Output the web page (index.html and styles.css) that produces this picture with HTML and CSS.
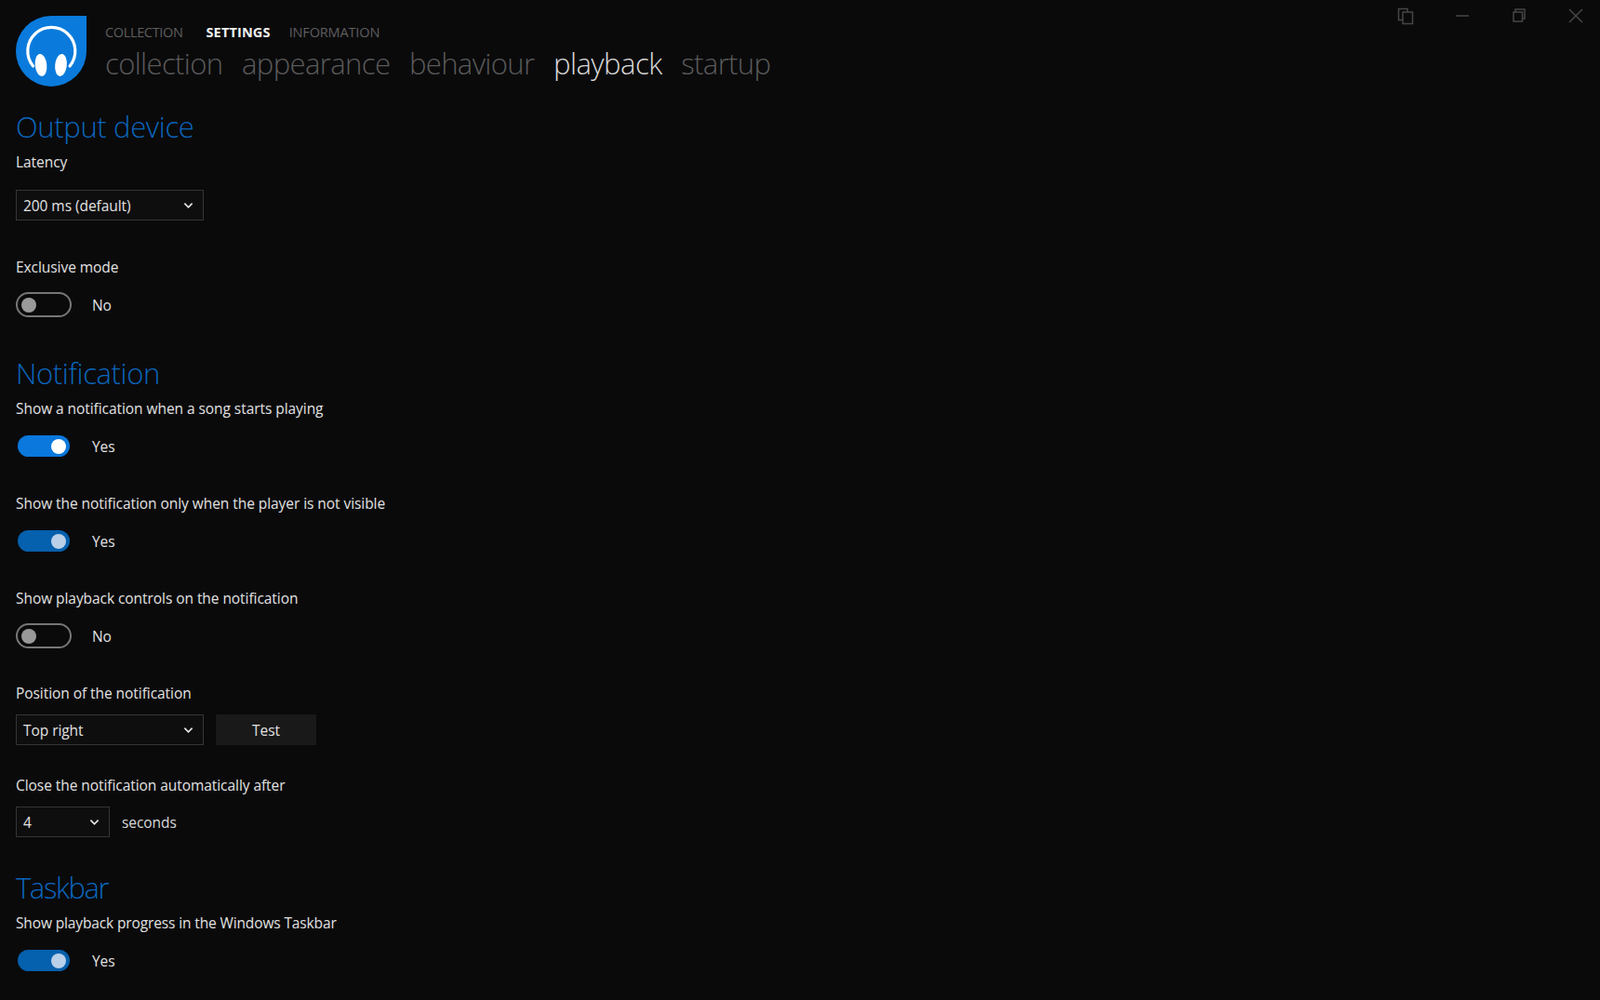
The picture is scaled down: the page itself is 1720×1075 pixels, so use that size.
FILE: index.html
```html
<!DOCTYPE html>
<html lang="en">
<head>
<meta charset="utf-8">
<title>Settings - Playback</title>
<link rel="stylesheet" href="styles.css">
</head>
<body>
<header class="header">
  <svg class="logo" viewBox="17 17 76 76" width="76" height="76" aria-hidden="true">
    <path d="M93 17V55A38 38 0 1 1 55 17Z" fill="#0a7bdc"/>
    <path d="M35.500 71A25.500 25.500 0 1 1 75.100 71" fill="none" stroke="#fff" stroke-width="3.200" stroke-linecap="round"/>
    <ellipse cx="44" cy="70" rx="6.300" ry="12" fill="#fff" transform="rotate(-6 44 70)"/>
    <ellipse cx="65.500" cy="70" rx="6.300" ry="12" fill="#fff" transform="rotate(6 65.500 70)"/>
  </svg>
  <nav class="nav">
    <div class="tabs">
      <span class="tab tab-first">COLLECTION</span>
      <span class="tab tab-active">SETTINGS</span>
      <span class="tab tab-last">INFORMATION</span>
    </div>
    <div class="subtabs">
      <span class="subtab">collection</span>
      <span class="subtab">appearance</span>
      <span class="subtab">behaviour</span>
      <span class="subtab subtab-active">playback</span>
      <span class="subtab">startup</span>
    </div>
  </nav>
  <div class="win-controls">
    <svg viewBox="0 0 20 20" width="20" height="20" aria-hidden="true"><path d="M7 14.500H2.500V2.500H12V6M7 6H17.500V18.500H7Z" fill="none" stroke="#464646" stroke-width="1.500"/></svg>
    <svg viewBox="0 0 20 20" width="20" height="20" aria-hidden="true"><path d="M3 10H17" stroke="#464646" stroke-width="1.500"/></svg>
    <svg viewBox="0 0 20 20" width="20" height="20" aria-hidden="true"><path d="M6 6V3H16V13H13.500M4 6H13.500V16H4Z" fill="none" stroke="#464646" stroke-width="1.500"/></svg>
    <svg viewBox="0 0 20 20" width="20" height="20" aria-hidden="true"><path d="M3 3L17 17M17 3L3 17" stroke="#464646" stroke-width="1.500"/></svg>
  </div>
</header>

<main class="content">
  <section class="section-first">
    <h2 class="heading">Output device</h2>
    <div class="field field-wide">
      <div class="label">Latency</div>
      <div class="row row-first">
        <div class="select select-lg"><span>200 ms (default)</span><svg class="chev" viewBox="0 0 12 8" width="11" height="8" aria-hidden="true"><path d="M1.500 1.500L6 6L10.500 1.500" fill="none" stroke="#e6e6e6" stroke-width="1.800"/></svg></div>
      </div>
    </div>
    <div class="field field-toggle">
      <div class="label">Exclusive mode</div>
      <div class="row row-toggle">
        <div class="toggle toggle-off"><i class="knob"></i></div>
        <span class="state">No</span>
      </div>
    </div>
  </section>

  <section>
    <h2 class="heading">Notification</h2>
    <div class="field field-toggle">
      <div class="label">Show a notification when a song starts playing</div>
      <div class="row row-toggle">
        <div class="toggle toggle-on"><i class="knob"></i></div>
        <span class="state">Yes</span>
      </div>
    </div>
    <div class="field field-toggle">
      <div class="label">Show the notification only when the player is not visible</div>
      <div class="row row-toggle">
        <div class="toggle toggle-dim"><i class="knob"></i></div>
        <span class="state">Yes</span>
      </div>
    </div>
    <div class="field field-toggle">
      <div class="label">Show playback controls on the notification</div>
      <div class="row row-toggle">
        <div class="toggle toggle-off"><i class="knob"></i></div>
        <span class="state">No</span>
      </div>
    </div>
    <div class="field">
      <div class="label">Position of the notification</div>
      <div class="row">
        <div class="select select-lg"><span>Top right</span><svg class="chev" viewBox="0 0 12 8" width="11" height="8" aria-hidden="true"><path d="M1.500 1.500L6 6L10.500 1.500" fill="none" stroke="#e6e6e6" stroke-width="1.800"/></svg></div>
        <div class="button">Test</div>
      </div>
    </div>
    <div class="field">
      <div class="label">Close the notification automatically after</div>
      <div class="row">
        <div class="select select-sm"><span>4</span><svg class="chev" viewBox="0 0 12 8" width="11" height="8" aria-hidden="true"><path d="M1.500 1.500L6 6L10.500 1.500" fill="none" stroke="#e6e6e6" stroke-width="1.800"/></svg></div>
        <span class="unit">seconds</span>
      </div>
    </div>
  </section>

  <section>
    <h2 class="heading heading-tight">Taskbar</h2>
    <div class="field field-toggle">
      <div class="label label-tight">Show playback progress in the Windows Taskbar</div>
      <div class="row row-toggle">
        <div class="toggle toggle-dim"><i class="knob"></i></div>
        <span class="state">Yes</span>
      </div>
    </div>
  </section>
</main>
</body>
</html>
```
FILE: styles.css
```css
* { box-sizing: border-box; }
html, body { margin: 0; height: 100%; }
body {
  width: 1720px;
  height: 1075px;
  overflow: hidden;
  background: #0a0a0b;
  color: #e2e2e2;
  font-family: "Open Sans", "Noto Sans", sans-serif;
}
.header {
  display: flex;
  align-items: flex-start;
  height: 114px;
  padding-left: 17px;
}
.logo { flex: none; margin-top: 17px; }
.nav { margin: 25px 0 0 20px; }
.tabs { display: flex; gap: 21px; height: 20px; line-height: 20px; font-size: 14.500px; letter-spacing: -0.35px; color: #5e5e5e; }
.tab-first { margin-right: 4px; }
.tab-active { color: #f0f0f0; font-weight: 700; letter-spacing: 0.15px; }
.tab-last { margin-left: -1px; letter-spacing: -0.15px; }
.subtabs { display: flex; gap: 20.500px; height: 44px; margin-top: 1px; line-height: 44px; font-size: 31px; font-weight: 300; letter-spacing: -0.6px; color: #5a5a5a; }
.subtab-active { color: #d8d8d8; letter-spacing: -0.5px; }
.win-controls { display: flex; gap: 41px; margin: 7px 16px 0 auto; }
.content { padding-left: 17px; }
.section-first { padding-bottom: 1px; }
.heading {
  margin: 0 0 5px;
  height: 44px;
  line-height: 44px;
  font-size: 31px;
  font-weight: 300;
  letter-spacing: -0.35px;
  color: #0a66bd;
}
.heading-tight { letter-spacing: -1.4px; }
.field { margin-bottom: 32px; }
.field-wide { margin-bottom: 39px; }
.field-toggle { margin-bottom: 37px; }
.label { height: 22px; line-height: 22px; font-size: 15.500px; letter-spacing: -0.06px; color: #e2e2e2; }
.label-tight { letter-spacing: -0.13px; }
.row { display: flex; align-items: center; margin-top: 12px; }
.row-first { margin-top: 19px; }
.row-toggle { margin-top: 16px; }
.select {
  display: flex;
  align-items: center;
  justify-content: space-between;
  height: 33px;
  padding: 0 10px 0 7px;
  border: 1px solid #353535;
  background: #0e0e0f;
  font-size: 15.500px;
  letter-spacing: -0.06px;
}
.select-lg { width: 202px; }
.select-sm { width: 101px; }
.chev { flex: none; }
.button {
  display: flex;
  align-items: center;
  justify-content: center;
  width: 108px;
  height: 33px;
  margin-left: 13px;
  background: #191919;
  font-size: 15.500px;
}
.unit { margin-left: 13px; font-size: 15.500px; letter-spacing: -0.06px; color: #d8d8d8; }
.toggle {
  display: flex;
  align-items: center;
  flex: none;
  width: 60px;
  height: 27px;
  padding: 0 4px;
  border: 2px solid transparent;
  border-radius: 14px;
  background-clip: padding-box;
}
.knob { display: block; width: 16px; height: 16px; border-radius: 50%; }
.toggle-off { border-color: #777; }
.toggle-off .knob { background: #999; }
.toggle-on { justify-content: flex-end; background-color: #0a78dc; }
.toggle-on .knob { background: #fff; }
.toggle-dim { justify-content: flex-end; background-color: #0560ad; }
.toggle-dim .knob { background: #b9d0e8; }
.state { margin-left: 22px; font-size: 15.500px; letter-spacing: -0.06px; color: #e2e2e2; }
```
